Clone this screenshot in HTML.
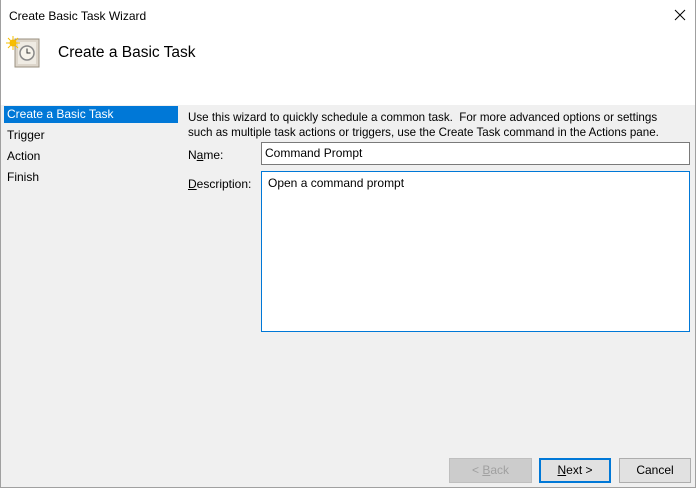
<!DOCTYPE html>
<html><head><style>
*{margin:0;padding:0;box-sizing:border-box}
body{width:696px;height:488px;background:#f0f0f0;font-family:"Liberation Sans",sans-serif;font-size:12px;color:#000;position:relative;overflow:hidden}
.a{position:absolute;white-space:nowrap}
.hdr{position:absolute;left:0;top:0;width:696px;height:105px;background:#fff}
.bl{position:absolute;left:0;top:0;width:1px;height:488px;background:#a0a0a0}
.br{position:absolute;right:0;top:0;width:1px;height:488px;background:#a0a0a0}
.bb{position:absolute;left:0;bottom:0;width:696px;height:1px;background:#a0a0a0}
.btn{position:absolute;top:458px;height:25px;border:1px solid #adadad;background:#e1e1e1;text-align:center;line-height:23px;font-size:12px}
u{text-decoration:underline}
</style></head><body>
<div class="hdr"></div>
<div class="bl"></div><div class="br"></div><div class="bb"></div>
<div class="a" style="left:9px;top:9px;font-size:12px">Create Basic Task Wizard</div>
<svg class="a" style="left:674px;top:9px" width="12" height="12"><path d="M1 1L11 11M11 1L1 11" stroke="#000" stroke-width="1"/></svg>
<svg class="a" style="left:6px;top:36px" width="34" height="34">
<rect x="9" y="3" width="24" height="28" fill="#ddd6cb" stroke="#9a9080"/>
<rect x="12" y="6" width="18" height="22" fill="#efebe3"/>
<circle cx="21" cy="17" r="7" fill="#f7f4ec" stroke="#888" stroke-width="1.5"/>
<path d="M21 12.5V17H24.5" stroke="#333" fill="none"/>
<circle cx="7" cy="7" r="3.5" fill="#f7b500"/>
<path d="M7 0V14M0 7H14M2 2L12 12M12 2L2 12" stroke="#f7c000" stroke-width="1"/>
</svg>
<div class="a" style="left:58px;top:44px;font-size:15.5px">Create a Basic Task</div>
<div class="a" style="left:4px;top:106px;width:174px;height:17px;background:#0078d7"></div>
<div class="a" style="left:7px;top:107px;color:#fff">Create a Basic Task</div>
<div class="a" style="left:7px;top:128px">Trigger</div>
<div class="a" style="left:7px;top:149px">Action</div>
<div class="a" style="left:7px;top:170px">Finish</div>
<div class="a" style="left:188px;top:110px;line-height:15px;font-size:11.6px">Use this wizard to quickly schedule a common task.&nbsp; For more advanced options or settings<br>such as multiple task actions or triggers, use the Create Task command in the Actions pane.</div>
<div class="a" style="left:188px;top:148px">N<u>a</u>me:</div>
<div class="a" style="left:261px;top:142px;width:429px;height:23px;background:#fff;border:1px solid #7a7a7a;padding:3px 0 0 3px">Command Prompt</div>
<div class="a" style="left:188px;top:177px"><u>D</u>escription:</div>
<div class="a" style="left:261px;top:171px;width:429px;height:161px;background:#fff;border:1px solid #0078d7;padding:4px 0 0 6px">Open a command prompt</div>
<div class="btn" style="left:449px;width:83px;color:#a0a0a0;background:#cccccc;border-color:#bfbfbf">&lt; <u>B</u>ack</div>
<div class="btn" style="left:539px;width:72px;border:2px solid #0078d7;line-height:21px"><u>N</u>ext &gt;</div>
<div class="btn" style="left:619px;width:72px">Cancel</div>
</body></html>
